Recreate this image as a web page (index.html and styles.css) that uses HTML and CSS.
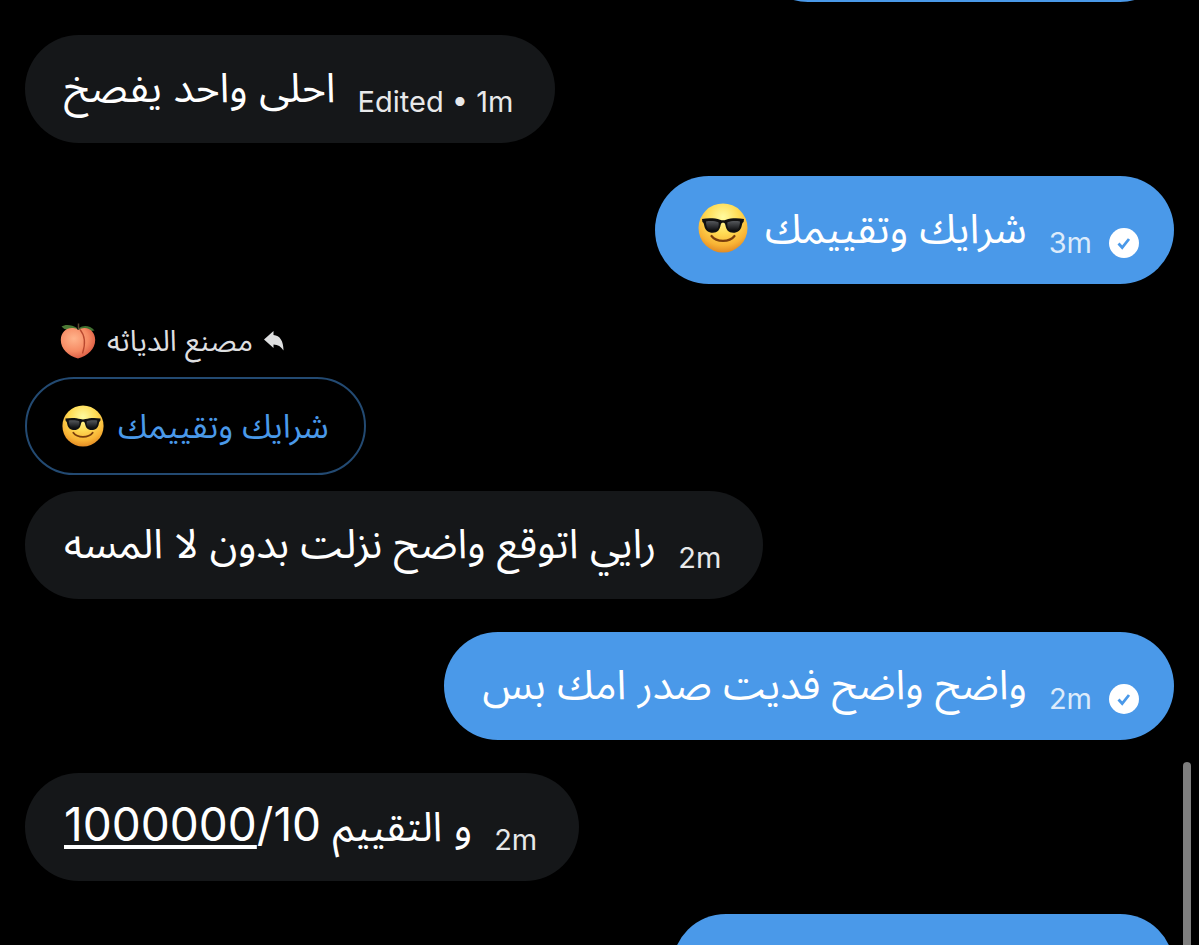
FILE: index.html
```html
<!DOCTYPE html>
<html lang="ar">

<head>
  <meta charset="UTF-8">
  <meta name="viewport" content="width=device-width, initial-scale=1.0">
  <title>Messages</title>
  <link rel="stylesheet" href="styles.css">
</head>

<body>

  <!-- shared icons -->
  <svg class="sprite" aria-hidden="true">
    <defs>
      <radialGradient id="face" cx="50%" cy="28%" r="72%">
        <stop offset="0" stop-color="#fffba0"></stop>
        <stop offset="0.45" stop-color="#ffdc55"></stop>
        <stop offset="0.8" stop-color="#f8b335"></stop>
        <stop offset="1" stop-color="#e38b24"></stop>
      </radialGradient>
      <linearGradient id="lens" x1="0" y1="0" x2="0" y2="1">
        <stop offset="0" stop-color="#55585c"></stop>
        <stop offset="1" stop-color="#0c0d0f"></stop>
      </linearGradient>
      <radialGradient id="fruit" cx="38%" cy="35%" r="70%">
        <stop offset="0" stop-color="#ffb48c"></stop>
        <stop offset="0.6" stop-color="#f68a63"></stop>
        <stop offset="1" stop-color="#d8553f"></stop>
      </radialGradient>
    </defs>
    <symbol id="cool" viewBox="0 0 50 50">
      <circle cx="25" cy="25" r="24.5" fill="url(#face)"></circle>
      <path d="M13.500 33c5 6.500 18 6.500 23 0" fill="none" stroke="#7a3d0c" stroke-width="2.200" stroke-linecap="round"></path>
      <path d="M4 16c6-1 13-1 18 .8 2 .7 4 .7 6 0 5-1.800 12-1.800 18-.8l-.4 3c-1.200.5-1.400 1.500-1.800 3.500-.9 5-4.300 7.300-8.500 7.300-5 0-7.100-3-7.900-7.500-.4-2-1-2.500-2.400-2.500s-2 .5-2.400 2.500c-.8 4.500-2.900 7.500-7.900 7.500-4.200 0-7.600-2.300-8.500-7.300-.4-2-.6-3-1.800-3.500z" fill="#111"></path>
      <path d="M8 18.500c4-.8 9-.6 12.500.8 1 5-1.500 8.500-6 8.500-4 0-6.300-2.500-6.500-9.300zM42 18.500c-4-.8-9-.6-12.500.8-1 5 1.500 8.500 6 8.500 4 0 6.300-2.500 6.500-9.300z" fill="url(#lens)"></path>
    </symbol>
    <symbol id="peach" viewBox="0 0 36 36">
      <path d="M17 5C12 1.500 5 1 1.500 3.500c3 3.500 9 4.500 15.500 3.500z" fill="#4b7a35"></path>
      <path d="M19 5c4-3 11-3 15.500 2.500-5 1-11 1-15.500-.5z" fill="#3f7030"></path>
      <path d="M18 35.500C8 33 .8 25.500.8 17 .8 9 6.500 4.500 13 5c2 .1 4 .8 5.500 2 2-1.300 4-2 6.200-1.900 6 .3 10.500 4.900 10.500 11.900 0 8.500-7.200 16-17.200 18.500z" fill="url(#fruit)"></path>
      <path d="M20 6.500c5 6 5.500 15 2.500 24" fill="none" stroke="#b9482f" stroke-width="1.300"></path>
      <path d="M18.500 7V.5" stroke="#5b4630" stroke-width="1.500"></path>
    </symbol>
    <symbol id="sent" viewBox="0 0 30 30">
      <circle cx="15" cy="15" r="15" fill="#fff"></circle>
      <path d="M9.500 15.500l3.700 4 6.800-8.500" fill="none" stroke="#4a99e9" stroke-width="2.800"></path>
    </symbol>
    <symbol id="reply" viewBox="0 0 20 20">
      <path d="M0 8.500L9.500 0v4C16 4.500 19.500 10 19.500 19.500 17 15.500 14 13.500 9.500 13.500V17z" fill="#dedfe0"></path>
    </symbol>
  </svg>

  <main class="thread">
    <div class="bubble sent cut-top"></div>

    <div class="bubble received">
      <p class="text" dir="rtl">احلى واحد يفصخ</p>
      <span class="meta">Edited • 1m</span>
    </div>

    <div class="bubble sent">
      <p class="text with-emoji" dir="rtl">
        <span>شرايك وتقييمك</span>
        <svg class="emoji" role="img" aria-label="😎"><use href="#cool"></use></svg>
      </p>
      <span class="meta">3m</span>
      <svg class="check"><use href="#sent"></use></svg>
    </div>

    <div class="reply">
      <p class="reply-name" dir="rtl">
        <svg class="arrow"><use href="#reply"></use></svg>
        <span>مصنع الدياثه</span>
        <svg class="peach" role="img" aria-label="🍑"><use href="#peach"></use></svg>
      </p>
      <div class="quote">
        <p class="quote-text with-emoji" dir="rtl">
          <span>شرايك وتقييمك</span>
          <svg class="emoji" role="img" aria-label="😎"><use href="#cool"></use></svg>
        </p>
      </div>
      <div class="bubble received">
        <p class="text" dir="rtl">رايي اتوقع واضح نزلت بدون لا المسه</p>
        <span class="meta">2m</span>
      </div>
    </div>

    <div class="bubble sent">
      <p class="text" dir="rtl">واضح واضح فديت صدر امك بس</p>
      <span class="meta">2m</span>
      <svg class="check"><use href="#sent"></use></svg>
    </div>

    <div class="bubble received">
      <p class="text" dir="rtl">و التقييم <bdi class="score" dir="ltr"><a href="#">1000000</a>/10</bdi></p>
      <span class="meta">2m</span>
    </div>

    <div class="bubble sent cut-bottom"></div>
  </main>

  <div class="scrollbar"></div>

</body>

</html>
```

FILE: styles.css
```css
* {
  margin: 0;
  padding: 0;
  box-sizing: border-box;
}

body {
  position: relative;
  height: 100vh;
  overflow: hidden;
  background-color: #000;
  color: #fff;
  font-family: Inter, "Noto Sans Arabic", "DejaVu Sans", sans-serif;
}

.sprite {
  position: absolute;
  width: 0;
  height: 0;
}

.thread {
  display: flex;
  flex-direction: column;
  align-items: flex-start;
  gap: 33px;
  height: 100vh;
  padding: 0 25px;
  overflow: hidden;
}

/* -------- bubbles -------- */
.bubble {
  display: flex;
  align-items: center;
  flex-shrink: 0;
  height: 108px;
  padding: 0 42px 0 39px;
  border-radius: 54px;
  white-space: nowrap;
}

.received {
  background-color: #151719;
}

.sent {
  align-self: flex-end;
  padding-right: 35px;
  background-color: #4a99e9;
}

/* scrolled out of view */
.cut-top {
  width: 420px;
  margin-top: -106px;
}

.cut-bottom {
  width: 502px;
}

.text {
  padding-bottom: 4px;
  font-size: 41px;
  line-height: 60px;
}

.with-emoji {
  display: flex;
  align-items: center;
  gap: 17px;
}

.meta {
  margin-top: 26px;
  margin-left: 22px;
  font-size: 29px;
  line-height: 36px;
  color: #e8e9ea;
}

.sent .meta {
  color: #dcebfb;
}

.check {
  width: 30px;
  height: 30px;
  margin-top: 26px;
  margin-left: 17px;
}

.emoji {
  width: 50px;
  height: 50px;
}

.text .emoji {
  margin-left: 4px;
}

.score {
  font-size: 46px;
}

.score a {
  color: #fff;
  text-decoration: underline;
  text-decoration-thickness: 4px;
  text-underline-offset: 4px;
}

/* -------- reply -------- */
.reply {
  display: flex;
  flex-direction: column;
  flex-shrink: 0;
  align-items: flex-start;
}

.reply-name {
  display: flex;
  align-items: center;
  gap: 11px;
  height: 48px;
  margin-bottom: 12px;
  padding-left: 35px;
  font-size: 29px;
  line-height: 48px;
  color: #dedfe0;
}

.arrow {
  width: 20px;
  height: 20px;
}

.peach {
  width: 36px;
  height: 36px;
}

.quote {
  display: flex;
  align-items: center;
  height: 98px;
  margin-bottom: 16px;
  padding: 0 35px;
  border: 2px solid #234a72;
  border-radius: 49px;
}

.quote-text {
  font-size: 33px;
  line-height: 50px;
  color: #4a99e9;
}

.quote .emoji {
  width: 42px;
  height: 42px;
}

.quote .with-emoji {
  gap: 14px;
}

.scrollbar {
  position: absolute;
  top: 762px;
  right: 8px;
  bottom: 0;
  width: 8px;
  border-radius: 4px 4px 0 0;
  background-color: #7e7e7e;
}
```
